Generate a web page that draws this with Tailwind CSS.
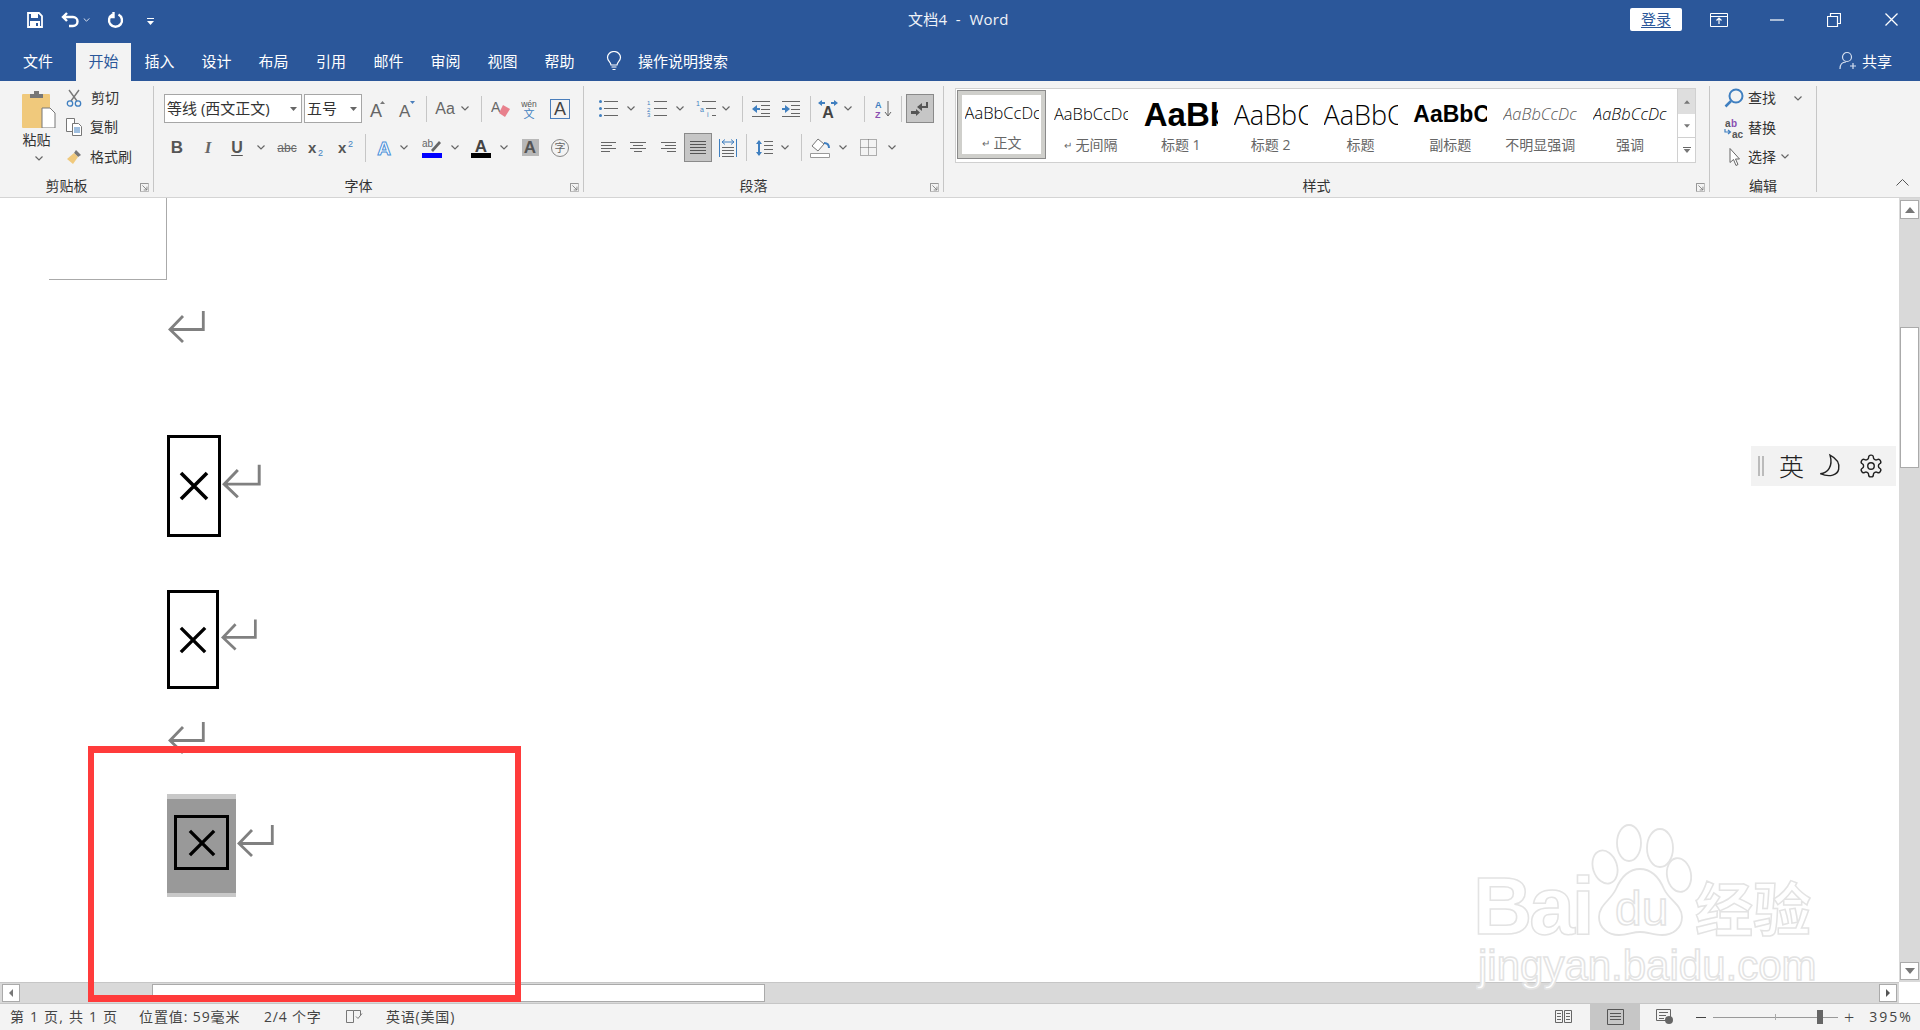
<!DOCTYPE html>
<html lang="zh-CN">
<head>
<meta charset="UTF-8">
<title>文档4 - Word</title>
<script src="https://cdn.jsdelivr.net/npm/@tailwindcss/browser@4"></script>
</head>
<body class="relative w-[1920px] h-[1030px] overflow-hidden bg-white flex flex-col text-[14px] leading-none text-[#333] [font-family:'Open_Sans','Noto_Sans_CJK_SC',sans-serif]">

<!-- shared icons -->
<svg class="hidden">
  <symbol id="chev" viewBox="0 0 8 5"><path d="M.5.5 4 4 7.500.5" fill="none" stroke="#666" stroke-width="1.200"/></symbol>
  <symbol id="launch" viewBox="0 0 11 11"><path d="M.5 10.500V.5h10M3 3l5.500 5.500M8.500 4.500v4h-4" fill="none" stroke="#777"/><path d="M.5 10.500h10v-10" fill="none" stroke="#aaa"/></symbol>
  <symbol id="ret" viewBox="0 0 38 32"><path d="M36.300 0v18.500H3M16 5 3 18.500 16 31" fill="none" stroke="#808080" stroke-width="2.800"/></symbol>
  <symbol id="cross" viewBox="0 0 30 30"><path d="M2 2l26 26M28 2 2 28" stroke="#000" stroke-width="3.600"/></symbol>
  <symbol id="tri" viewBox="0 0 10 6"><path d="M0 6 5 0l5 6z" fill="#777"/></symbol>
</svg>

<!-- title bar -->
<header class="bg-[#2b579a] text-white flex-none">
  <div class="h-[43px] pb-[4px] flex items-center">
    <div class="w-[908px] flex items-center pl-[27px]">
      <svg class="w-4 h-4" viewBox="0 0 16 16"><path d="M1 1h11l3 3v11H1z" fill="none" stroke="#fff" stroke-width="1.800"/><path d="M4 1h7v5H4zM3 9h10v6H3z" fill="#fff"/><path d="M9 11h2v3H9z" fill="#2b579a"/></svg>
      <svg class="w-[18px] h-4 ml-[18px]" viewBox="0 0 18 16"><path d="M2 5h10a4.500 4.500 0 0 1 0 9H8M6 1 2 5l4 4" fill="none" stroke="#fff" stroke-width="2.400"/></svg>
      <svg class="w-[7px] h-1 ml-[4px]" viewBox="0 0 8 5"><path d="M.5.5 4 4 7.500.5" fill="none" stroke="#dfe6f2" stroke-width="1.200"/></svg>
      <svg class="w-[17px] h-[17px] ml-[17px]" viewBox="0 0 17 17"><path d="M5.500 3.500a6.500 6.500 0 1 0 6 0M6.500 1v5h-4.500" fill="none" stroke="#fff" stroke-width="2.400"/></svg>
      <svg class="w-[7px] h-[7px] ml-[23px] mt-1" viewBox="0 0 7 7"><path d="M0 0h7v1H0zM0 3h7L3.500 7z" fill="#fff"/></svg>
    </div>
    <div class="w-[722px] text-[15px] text-[#f0f3f8] whitespace-pre tracking-[0.3px]">文档4  -  Word</div>
    <div class="w-[52px] h-[23px] bg-white text-[#2b579a] rounded-[2px] flex items-center justify-center text-[15px] underline underline-offset-2">登录</div>
    <svg class="w-[18px] h-[14px] ml-[28px]" viewBox="0 0 18 14"><path d="M.5.5h17v13H.5zM.5 3.500h17" fill="none" stroke="#fff"/><path d="M9 5v6M6.500 7.500 9 5l2.500 2.500" fill="none" stroke="#fff" stroke-width="1.200"/></svg>
    <svg class="w-[14px] h-[2px] ml-[42px]" viewBox="0 0 14 2"><path d="M0 1h14" stroke="#fff" stroke-width="1.200"/></svg>
    <svg class="w-[14px] h-[14px] ml-[43px]" viewBox="0 0 14 14"><path d="M.5 3.500h10v10H.5zM3.500 3.500v-3h10v10h-3" fill="none" stroke="#fff" stroke-width="1.200"/></svg>
    <svg class="w-[13px] h-[13px] ml-[44px]" viewBox="0 0 13 13"><path d="M.5.5l12 12M12.500.5l-12 12" stroke="#fff" stroke-width="1.300"/></svg>
  </div>
  <nav class="h-[38px] flex items-start text-[15px]">
    <div class="w-[76px] h-[38px] pb-[2px] flex items-center justify-center">文件</div>
    <div class="w-[55px] h-[38px] pb-[2px] flex items-center justify-center bg-[#f3f3f3] text-[#2b579a]">开始</div>
    <div class="w-[57px] h-[38px] pb-[2px] flex items-center justify-center">插入</div>
    <div class="w-[57px] h-[38px] pb-[2px] flex items-center justify-center">设计</div>
    <div class="w-[57px] h-[38px] pb-[2px] flex items-center justify-center">布局</div>
    <div class="w-[58px] h-[38px] pb-[2px] flex items-center justify-center">引用</div>
    <div class="w-[57px] h-[38px] pb-[2px] flex items-center justify-center">邮件</div>
    <div class="w-[57px] h-[38px] pb-[2px] flex items-center justify-center">审阅</div>
    <div class="w-[57px] h-[38px] pb-[2px] flex items-center justify-center">视图</div>
    <div class="w-[57px] h-[38px] pb-[2px] flex items-center justify-center">帮助</div>
    <div class="h-[38px] pb-[2px] flex items-center ml-[18px]">
      <svg class="w-4 h-5" viewBox="0 0 16 20"><path d="M5 14c0-3-3.500-4-3.500-7.500a6.500 6 0 0 1 13 0C14.500 10 11 11 11 14zM5.500 16h5M6.500 18.500h3" fill="none" stroke="#fff" stroke-width="1.200"/></svg>
      <span class="ml-[16px] w-[1204px]">操作说明搜索</span>
      <svg class="w-[18px] h-[20px] -ml-[3px]" viewBox="0 0 18 20"><circle cx="8" cy="6" r="4.500" fill="none" stroke="#d6e0f0" stroke-width="1.200"/><path d="M1 18c0-5 3-7 6-7M11 15h6M14 12v6" fill="none" stroke="#d6e0f0" stroke-width="1.200"/></svg>
      <span class="ml-[5px]">共享</span>
    </div>
  </nav>
</header>

<!-- ribbon -->
<section class="h-[117px] flex-none bg-[#f3f3f3] border-b border-[#d4d4d4] flex pt-[5px] text-[14px]">

  <!-- clipboard -->
  <div class="relative w-[154px] h-[106px] border-r border-[#c6c6c6] flex flex-col">
    <div class="h-[93px] flex pl-[22px] pt-[4px]">
      <div class="w-[34px] flex flex-col items-center">
        <svg class="w-[34px] h-[38px]" viewBox="0 0 34 38"><rect y="4" width="28" height="34" rx="1" fill="#f0c97c"/><path d="M8 4h4V1h5v3h4v4H8z" fill="#777"/><path d="M20 18h8l5 5v15H20z" fill="#fff" stroke="#777"/></svg>
        <span class="mt-[5px] mr-[5px]">粘贴</span>
        <svg class="w-2 h-[5px] mt-[9px]"><use href="#chev"/></svg>
      </div>
      <div class="ml-[10px] flex flex-col">
        <div class="h-[29px] flex items-center -mt-[7px]">
          <svg class="w-[16px] h-[18px]" viewBox="0 0 16 18"><path d="M3 1l8 11M13 1 5 12" stroke="#777" stroke-width="1.400"/><circle cx="4" cy="14.500" r="2.700" fill="none" stroke="#3f7fc0" stroke-width="1.300"/><circle cx="12" cy="14.500" r="2.700" fill="none" stroke="#3f7fc0" stroke-width="1.300"/></svg>
          <span class="ml-[9px]">剪切</span>
        </div>
        <div class="h-[30px] flex items-center">
          <svg class="w-[16px] h-[18px]" viewBox="0 0 16 18"><path d="M.5.5h8v13h-8z" fill="#fff" stroke="#777"/><path d="M6.500 5.500h6l3 3v9h-9z" fill="#fff" stroke="#777"/><path d="M8 10h6M8 12h6M8 14h6" stroke="#3f7fc0"/></svg>
          <span class="ml-[8px]">复制</span>
        </div>
        <div class="h-[30px] flex items-center">
          <svg class="w-[16px] h-[16px]" viewBox="0 0 16 16"><path d="M10 1l5 5-3 2-4-4z" fill="#777"/><path d="M8 4l4 4-5 7-6-5z" fill="#f0c97c"/></svg>
          <span class="ml-[8px]">格式刷</span>
        </div>
      </div>
    </div>
    <div class="h-[13px] text-center pr-[20px]">剪贴板</div>
    <svg class="absolute right-[4px] bottom-0 w-[9px] h-[9px]"><use href="#launch"/></svg>
  </div>

  <!-- font -->
  <div class="relative w-[430px] h-[106px] border-r border-[#c6c6c6] flex flex-col">
    <div class="h-[93px] pt-[8px]">
      <div class="h-[29px] flex items-center">
        <div class="ml-[10px] w-[138px] h-[29px] bg-white border border-[#a6a6a6] flex items-center pl-[2px] pr-[4px] text-[15px] justify-between"><span>等线 (西文正文)</span><svg class="w-[7px] h-[4px]" viewBox="0 0 7 4"><path d="M0 0h7L3.500 4z" fill="#666"/></svg></div>
        <div class="ml-[2px] w-[58px] h-[29px] bg-white border border-[#a6a6a6] flex items-center pl-[2px] pr-[4px] text-[15px] justify-between"><span>五号</span><svg class="w-[7px] h-[4px]" viewBox="0 0 7 4"><path d="M0 0h7L3.500 4z" fill="#666"/></svg></div>
        <div class="ml-[9px] w-4 flex justify-center"><svg class="w-5 h-5 flex-none" viewBox="0 0 20 20"><text x="1" y="18" font-size="18" fill="#666" font-family="Liberation Sans">A</text><path d="M11 5l2.500-3L16 5z" fill="#777"/></svg></div>
        <div class="ml-[13px] w-4 flex justify-center"><svg class="w-5 h-5 flex-none" viewBox="0 0 20 20"><text x="1" y="18" font-size="17" fill="#666" font-family="Liberation Sans">A</text><path d="M12 2h5l-2.500 3z" fill="#4a7ebb"/></svg></div>
        <div class="ml-[2px] w-4 flex justify-center"><div class="w-px h-[26px] bg-[#c6c6c6]"></div></div>
        <div class="ml-[3px] w-4 flex justify-center text-[16px] text-[#666] [font-family:'Liberation_Sans']">Aa</div>
        <div class="ml-[4px] w-4 flex justify-center"><svg class="w-2 h-[5px]"><use href="#chev"/></svg></div>
        <div class="w-4 flex justify-center"><div class="w-px h-[26px] bg-[#c6c6c6]"></div></div>
        <div class="ml-[4px] w-4 flex justify-center"><svg class="w-5 h-5 flex-none" viewBox="0 0 20 20"><text x="0" y="13" font-size="14" fill="#666" font-family="Liberation Sans">A</text><path d="M12 6l7 4-5 8-6-4z" fill="#e8808c"/></svg></div>
        <div class="ml-[12px] w-4 flex justify-center"><svg class="w-5 h-5 flex-none" viewBox="0 0 20 20"><text x="10" y="8" font-size="8.500" fill="#555" text-anchor="middle" font-family="Liberation Sans">wén</text><text x="10" y="19" font-size="11" fill="#3f7fc0" text-anchor="middle">文</text></svg></div>
        <div class="ml-[15px] w-4 flex justify-center"><div class="flex-none w-[20px] h-[20px] border border-[#4a7ebb] flex items-center justify-center text-[18px] text-[#444] [font-family:'Liberation_Sans']">A</div></div>
      </div>
      <div class="h-[29px] mt-[10px] flex items-center">
        <div class="ml-[15px] w-4 text-center text-[17px] font-bold text-[#555] [font-family:'Liberation_Sans']">B</div>
        <div class="ml-[15px] w-4 text-center text-[17px] italic font-bold text-[#666] [font-family:'Liberation_Serif']">I</div>
        <div class="ml-[13px] w-4 text-center text-[16px] font-bold text-[#555] underline underline-offset-2 [font-family:'Liberation_Sans']">U</div>
        <div class="ml-[8px] w-4 flex justify-center"><svg class="w-2 h-[5px]"><use href="#chev"/></svg></div>
        <div class="ml-[10px] w-4 flex justify-center text-[12px] text-[#666] line-through [font-family:'Liberation_Sans']">abc</div>
        <div class="ml-[14px] w-4 flex justify-center"><svg class="w-5 h-5 flex-none" viewBox="0 0 20 20"><text x="1" y="15" font-size="15" font-weight="bold" fill="#555" font-family="Liberation Sans">x</text><text x="11" y="18" font-size="9" fill="#3f7fc0" font-family="Liberation Sans">2</text></svg></div>
        <div class="ml-[14px] w-4 flex justify-center"><svg class="w-5 h-5 flex-none" viewBox="0 0 20 20"><text x="1" y="15" font-size="15" font-weight="bold" fill="#555" font-family="Liberation Sans">x</text><text x="11" y="9" font-size="9" fill="#3f7fc0" font-family="Liberation Sans">2</text></svg></div>
        <div class="ml-[2px] w-4 flex justify-center"><div class="w-px h-[28px] bg-[#c6c6c6]"></div></div>
        <div class="ml-[3px] w-4 flex justify-center"><svg class="w-5 h-5 flex-none" viewBox="0 0 20 20"><text x="10" y="17" font-size="19" font-weight="bold" text-anchor="middle" fill="#fff" stroke="#4a90d9" font-family="Liberation Sans">A</text></svg></div>
        <div class="ml-[4px] w-4 flex justify-center"><svg class="w-2 h-[5px]"><use href="#chev"/></svg></div>
        <div class="ml-[12px] w-4 flex justify-center"><svg class="w-5 h-5 flex-none" viewBox="0 0 20 20"><text x="0" y="9" font-size="10" fill="#666" font-family="Liberation Sans">ab</text><path d="M9 12l8-9 2 2-8 9z" fill="#666"/><path d="M0 15h20v5H0z" fill="#00f"/></svg></div>
        <div class="ml-[7px] w-4 flex justify-center"><svg class="w-2 h-[5px]"><use href="#chev"/></svg></div>
        <div class="ml-[10px] w-4 flex justify-center"><svg class="w-5 h-5 flex-none" viewBox="0 0 20 20"><text x="10" y="14" font-size="17" font-weight="bold" text-anchor="middle" fill="#444" font-family="Liberation Sans">A</text><path d="M0 15h20v5H0z" fill="#000"/></svg></div>
        <div class="ml-[7px] w-4 flex justify-center"><svg class="w-2 h-[5px]"><use href="#chev"/></svg></div>
        <div class="ml-[10px] w-4 flex justify-center"><div class="flex-none w-[17px] h-[17px] bg-[#b8b8b8] flex items-center justify-center text-[17px] font-bold text-[#555] [font-family:'Liberation_Sans']">A</div></div>
        <div class="ml-[14px] w-4 flex justify-center"><div class="flex-none w-[18px] h-[18px] rounded-full border border-[#888] flex items-center justify-center text-[11px] text-[#666]">字</div></div>
      </div>
    </div>
    <div class="h-[13px] text-center pr-[20px]">字体</div>
    <svg class="absolute right-[4px] bottom-0 w-[9px] h-[9px]"><use href="#launch"/></svg>
  </div>

  <!-- paragraph -->
  <div class="relative w-[360px] h-[106px] border-r border-[#c6c6c6] flex flex-col">
    <div class="h-[93px] pt-[8px]">
      <div class="h-[29px] flex items-center">
        <div class="ml-[16px] w-4 flex justify-center"><svg class="w-[19px] h-[17px] flex-none" viewBox="0 0 19 17"><path d="M5 1.500h14M5 8.500h14M5 15.500h14" stroke="#666"/><circle cx="1.500" cy="1.500" r="1.500" fill="#3f7fc0"/><circle cx="1.500" cy="8.500" r="1.500" fill="#3f7fc0"/><circle cx="1.500" cy="15.500" r="1.500" fill="#3f7fc0"/></svg></div>
        <div class="ml-[7px] w-4 flex justify-center"><svg class="w-2 h-[5px]"><use href="#chev"/></svg></div>
        <div class="ml-[10px] w-4 flex justify-center"><svg class="w-[20px] h-[17px] flex-none" viewBox="0 0 20 17"><path d="M7 1.500h13M7 8.500h13M7 15.500h13" stroke="#666"/><text x="0" y="5" font-size="6" fill="#3f7fc0" font-family="Liberation Sans">1</text><text x="0" y="11.500" font-size="6" fill="#3f7fc0" font-family="Liberation Sans">2</text><text x="0" y="17" font-size="6" fill="#3f7fc0" font-family="Liberation Sans">3</text></svg></div>
        <div class="ml-[7px] w-4 flex justify-center"><svg class="w-2 h-[5px]"><use href="#chev"/></svg></div>
        <div class="ml-[10px] w-4 flex justify-center"><svg class="w-[20px] h-[17px] flex-none" viewBox="0 0 20 17"><path d="M6 1.500h14M10 8.500h10M16 15.500h4" stroke="#666"/><text x="0" y="6" font-size="7" fill="#3f7fc0" font-family="Liberation Sans">1</text><text x="4" y="12" font-size="7" fill="#3f7fc0" font-family="Liberation Sans">a</text><text x="11" y="17" font-size="7" fill="#3f7fc0" font-family="Liberation Sans">i</text></svg></div>
        <div class="ml-[4px] w-4 flex justify-center"><svg class="w-2 h-[5px]"><use href="#chev"/></svg></div>
        <div class="w-4 flex justify-center"><div class="w-px h-[26px] bg-[#c6c6c6]"></div></div>
        <div class="ml-[3px] w-4 flex justify-center"><svg class="w-[18px] h-[16px] flex-none" viewBox="0 0 18 16"><path d="M0 .5h18M9 4.500h9M9 8.500h9M9 12.500h9M0 15.500h18" stroke="#666"/><path d="M0 8l5-4v3h3v2H5v3z" fill="#3f7fc0"/></svg></div>
        <div class="ml-[14px] w-4 flex justify-center"><svg class="w-[18px] h-[16px] flex-none" viewBox="0 0 18 16"><path d="M0 .5h18M9 4.500h9M9 8.500h9M9 12.500h9M0 15.500h18" stroke="#666"/><path d="M8 8 3 4v3H0v2h3v3z" fill="#3f7fc0"/></svg></div>
        <div class="ml-[3px] w-4 flex justify-center"><div class="w-px h-[26px] bg-[#c6c6c6]"></div></div>
        <div class="ml-[2px] w-4 flex justify-center"><svg class="w-[20px] h-[18px] flex-none" viewBox="0 0 20 18"><path d="M0 3l4-3v2h3v2H4v2zM20 3l-4-3v2h-3v2h3v2z" fill="#3f7fc0"/><text x="10" y="18" font-size="16" font-weight="bold" text-anchor="middle" fill="#444" font-family="Liberation Sans">A</text></svg></div>
        <div class="ml-[4px] w-4 flex justify-center"><svg class="w-2 h-[5px]"><use href="#chev"/></svg></div>
        <div class="w-4 flex justify-center"><div class="w-px h-[26px] bg-[#c6c6c6]"></div></div>
        <div class="ml-[4px] w-4 flex justify-center"><svg class="w-[18px] h-[18px] flex-none" viewBox="0 0 18 18"><text x="0" y="8" font-size="9" font-weight="bold" fill="#3f7fc0" font-family="Liberation Sans">A</text><text x="0" y="18" font-size="9" font-weight="bold" fill="#8a4fb0" font-family="Liberation Sans">Z</text><path d="M13 1v15M10 12l3 4 3-4" fill="none" stroke="#666"/></svg></div>
        <div class="ml-[1px] w-4 flex justify-center"><div class="w-px h-[26px] bg-[#c6c6c6]"></div></div>
        <div class="-ml-[3px] w-[28px] h-[29px] bg-[#c6c6c6] border border-[#8a8a8a] flex items-center justify-center"><svg class="w-[18px] h-[16px]" viewBox="0 0 18 16"><path d="M16 1v5H7" fill="none" stroke="#555" stroke-width="2"/><path d="M11 2 6 6l5 4zM0 10h5v-2l4 3.500L5 15v-2H0z" fill="#555"/></svg></div>
      </div>
      <div class="h-[29px] mt-[10px] flex items-center">
        <div class="ml-[16px] w-4 flex justify-center"><svg class="w-[15px] h-[11px] flex-none" viewBox="0 0 15 11"><path d="M0 .5h15M0 3.500h11M0 6.500h15M0 9.500h9" stroke="#666"/></svg></div>
        <div class="ml-[14px] w-4 flex justify-center"><svg class="w-[16px] h-[11px] flex-none" viewBox="0 0 16 11"><path d="M0 .5h16M3 3.500h10M0 6.500h16M4 9.500h8" stroke="#666"/></svg></div>
        <div class="ml-[14px] w-4 flex justify-center"><svg class="w-[15px] h-[11px] flex-none" viewBox="0 0 15 11"><path d="M0 .5h15M4 3.500h11M0 6.500h15M6 9.500h9" stroke="#666"/></svg></div>
        <div class="ml-[8px] w-[28px] h-[29px] bg-[#c6c6c6] border border-[#8a8a8a] flex items-center justify-center"><svg class="w-[16px] h-[13px]" viewBox="0 0 16 13"><path d="M0 .5h16M0 3.500h16M0 6.500h16M0 9.500h16M0 12.500h16" stroke="#555"/></svg></div>
        <div class="ml-[8px] w-4 flex justify-center"><svg class="w-[18px] h-[18px] flex-none" viewBox="0 0 18 18"><path d="M.5 0v18M17.500 0v18" stroke="#3f7fc0"/><path d="M3 3h12M3 3l3-2.500M3 3l3 2.500M15 3l-3-2.500M15 3l-3 2.500" fill="none" stroke="#3f7fc0"/><path d="M3 8.500h12M3 11.500h12M3 14.500h12M3 17.500h12" stroke="#666"/></svg></div>
        <div class="ml-[2px] w-4 flex justify-center"><div class="w-px h-[27px] bg-[#c6c6c6]"></div></div>
        <div class="ml-[2px] w-4 flex justify-center"><svg class="w-[17px] h-[18px] flex-none" viewBox="0 0 17 18"><path d="M3 2v14" stroke="#3f7fc0" stroke-width="2"/><path d="M0 5l3-4 3 4zM0 13l3 4 3-4z" fill="#3f7fc0"/><path d="M8 2.500h9M8 6.500h9M8 10.500h9M8 14.500h9" stroke="#666"/></svg></div>
        <div class="ml-[5px] w-4 flex justify-center"><svg class="w-2 h-[5px]"><use href="#chev"/></svg></div>
        <div class="w-4 flex justify-center"><div class="w-px h-[27px] bg-[#c6c6c6]"></div></div>
        <div class="ml-[3px] w-4 flex justify-center"><svg class="w-[20px] h-[20px] flex-none" viewBox="0 0 20 20"><path d="M8 1l6 5-6 7-6-5z" fill="#fff" stroke="#777"/><path d="M14 5c3 0 5 1 5 5" fill="none" stroke="#3f7fc0" stroke-width="2"/><path d="M.5 15.500h19v4H.5z" fill="#fff" stroke="#999"/></svg></div>
        <div class="ml-[7px] w-4 flex justify-center"><svg class="w-2 h-[5px]"><use href="#chev"/></svg></div>
        <div class="ml-[9px] w-4 flex justify-center"><svg class="w-[17px] h-[17px] flex-none" viewBox="0 0 17 17"><path d="M.5.5h16v16H.5zM8.500.5v16M.5 8.500h16" fill="none" stroke="#666" stroke-dasharray="1 1"/></svg></div>
        <div class="ml-[8px] w-4 flex justify-center"><svg class="w-2 h-[5px]"><use href="#chev"/></svg></div>
      </div>
    </div>
    <div class="h-[13px] text-center pr-[20px]">段落</div>
    <svg class="absolute right-[4px] bottom-0 w-[9px] h-[9px]"><use href="#launch"/></svg>
  </div>

  <!-- styles -->
  <div class="relative w-[766px] h-[106px] border-r border-[#c6c6c6] flex flex-col">
    <div class="h-[93px] pl-[11px] pt-[2px]">
      <div class="w-[741px] h-[75px] bg-white border border-[#d0d0d0] flex">
        <div class="w-[90px] h-[73px] flex flex-col items-center">
          <div class="ml-[1px] mt-[1px] w-[89px] h-[69px] border border-[#8a8a8a] flex">
            <div class="w-full h-full border-[4px] border-[#cfcfcb] flex flex-col items-center">
              <div class="w-[74px] h-[38px] overflow-hidden flex items-center whitespace-nowrap text-[16.500px] font-light text-black">AaBbCcDc</div>
              <div class="h-[22px] mt-[1px] flex items-center text-[14px] text-[#666]"><span class="text-[10px] mr-[4px]">↵</span>正文</div>
            </div>
          </div>
        </div>
        <div class="w-[90px] flex flex-col items-center pt-[6px]">
          <div class="w-[74px] h-[38px] overflow-hidden flex items-center whitespace-nowrap text-[16.500px] font-light text-black">AaBbCcDc</div>
          <div class="h-[22px] mt-[1px] flex items-center text-[14px] text-[#666]"><span class="text-[10px] mr-[3px]">↵</span>无间隔</div>
        </div>
        <div class="w-[90px] flex flex-col items-center pt-[6px]">
          <div class="w-[74px] h-[38px] overflow-hidden flex items-center whitespace-nowrap text-[33px] font-bold text-black [font-family:'Liberation_Sans']">AaBbC</div>
          <div class="h-[22px] mt-[1px] flex items-center text-[14px] text-[#666]">标题 1</div>
        </div>
        <div class="w-[90px] flex flex-col items-center pt-[6px]">
          <div class="w-[74px] h-[38px] overflow-hidden flex items-center whitespace-nowrap text-[27px] font-light text-black">AaBbC</div>
          <div class="h-[22px] mt-[1px] flex items-center text-[14px] text-[#666]">标题 2</div>
        </div>
        <div class="w-[90px] flex flex-col items-center pt-[6px]">
          <div class="w-[74px] h-[38px] overflow-hidden flex items-center whitespace-nowrap text-[27px] font-light text-black">AaBbC</div>
          <div class="h-[22px] mt-[1px] flex items-center text-[14px] text-[#666]">标题</div>
        </div>
        <div class="w-[90px] flex flex-col items-center pt-[6px]">
          <div class="w-[74px] h-[38px] overflow-hidden flex items-center whitespace-nowrap text-[23px] font-bold text-black [font-family:'Liberation_Sans']">AaBbC</div>
          <div class="h-[22px] mt-[1px] flex items-center text-[14px] text-[#666]">副标题</div>
        </div>
        <div class="w-[90px] flex flex-col items-center pt-[6px]">
          <div class="w-[74px] h-[38px] overflow-hidden flex items-center whitespace-nowrap text-[16.500px] font-light italic text-[#555]">AaBbCcDc</div>
          <div class="h-[22px] mt-[1px] flex items-center text-[14px] text-[#666]">不明显强调</div>
        </div>
        <div class="w-[90px] flex flex-col items-center pt-[6px]">
          <div class="w-[74px] h-[38px] overflow-hidden flex items-center whitespace-nowrap text-[16.500px] font-light italic text-black">AaBbCcDc</div>
          <div class="h-[22px] mt-[1px] flex items-center text-[14px] text-[#666]">强调</div>
        </div>
        <div class="ml-[2px] w-[18px] border-l border-[#d0d0d0] flex flex-col">
          <div class="h-[25px] bg-[#dedede] flex items-center justify-center"><svg class="w-[6px] h-[4px]"><use href="#tri"/></svg></div>
          <div class="h-[24px] flex items-center justify-center border-b border-[#d0d0d0]"><svg class="w-[6px] h-[4px] rotate-180"><use href="#tri"/></svg></div>
          <div class="flex-1 flex flex-col items-center justify-center"><div class="w-[8px] h-px bg-[#666] mb-[1px]"></div><svg class="w-[8px] h-[4px] rotate-180"><use href="#tri"/></svg></div>
        </div>
      </div>
    </div>
    <div class="h-[13px] text-center pr-[20px]">样式</div>
    <svg class="absolute right-[4px] bottom-0 w-[9px] h-[9px]"><use href="#launch"/></svg>
  </div>

  <!-- editing -->
  <div class="w-[107px] h-[106px] border-r border-[#c6c6c6] flex flex-col">
    <div class="h-[93px] pl-[14px]">
      <div class="h-[30px] mt-[-3px] flex items-center">
        <svg class="w-[20px] h-[20px]" viewBox="0 0 20 20"><circle cx="12" cy="8" r="6.500" fill="none" stroke="#3f7fc0" stroke-width="2"/><path d="M7 13l-5.500 5.500" stroke="#3f7fc0" stroke-width="2.500"/></svg>
        <span class="ml-[4px]">查找</span>
        <svg class="w-2 h-[5px] ml-[18px]"><use href="#chev"/></svg>
      </div>
      <div class="h-[29px] flex items-center">
        <svg class="w-[20px] h-[20px]" viewBox="0 0 20 20"><text x="1" y="9" font-size="10" fill="#555" font-family="Liberation Sans" font-weight="bold">a</text><text x="7" y="9" font-size="10" fill="#8a4fb0" font-family="Liberation Sans" font-weight="bold">b</text><text x="8" y="19.500" font-size="10" fill="#555" font-family="Liberation Sans" font-weight="bold">ac</text><path d="M1 11v3h5M4 12l2.500 2L4 16" fill="none" stroke="#3f7fc0" stroke-width="1.200"/></svg>
        <span class="ml-[4px]">替换</span>
      </div>
      <div class="h-[29px] flex items-center">
        <svg class="w-[20px] h-[18px]" viewBox="0 0 20 18"><path d="M6 .5v14l3.500-3 2.500 6 2-1-2.500-5.500h4z" fill="#fff" stroke="#666"/></svg>
        <span class="ml-[4px]">选择</span>
        <svg class="w-2 h-[5px] ml-[5px]"><use href="#chev"/></svg>
      </div>
    </div>
    <div class="h-[13px] text-center">编辑</div>
  </div>

  <div class="flex-1 flex items-end justify-end pr-[11px] pb-[6px] h-[106px]">
    <svg class="w-[13px] h-[7px]" viewBox="0 0 13 7"><path d="M.5 6.500l6-6 6 6" fill="none" stroke="#555"/></svg>
  </div>
</section>

<!-- document area -->
<main class="flex-none h-[805px] flex">
  <div class="w-[1899px] flex flex-col">
    <div class="h-[784px] pl-[167px] flex flex-col items-start overflow-hidden">
      <div class="-ml-[118px] w-[118px] h-[82px] flex-none border-r border-b border-[#aaa]"></div>
      <svg class="w-[38px] h-[32px] mt-[31px] flex-none"><use href="#ret"/></svg>
      <div class="mt-[92px] flex items-start flex-none">
        <div class="w-[54px] h-[102px] border-[3px] border-black flex items-center justify-center"><svg class="w-[30px] h-[30px]"><use href="#cross"/></svg></div>
        <svg class="w-[40px] h-[35px] mt-[29px]"><use href="#ret"/></svg>
      </div>
      <div class="mt-[53px] flex items-start flex-none">
        <div class="w-[52px] h-[99px] border-[3px] border-black flex items-center justify-center"><svg class="w-[28px] h-[28px]"><use href="#cross"/></svg></div>
        <svg class="w-[37px] h-[32px] mt-[29px] ml-[1px]"><use href="#ret"/></svg>
      </div>
      <svg class="w-[38px] h-[32px] mt-[33px] flex-none"><use href="#ret"/></svg>
      <div class="mt-[40px] flex items-start flex-none">
        <div class="w-[69px] h-[103px] bg-[#999] flex flex-col">
          <div class="h-[5px] bg-[#c8c8c8]"></div>
          <div class="flex-1 pt-[16px] pl-[7px]">
            <div class="w-[55px] h-[55px] border-[3px] border-black flex items-center justify-center"><svg class="w-[28px] h-[28px]"><use href="#cross"/></svg></div>
          </div>
          <div class="h-[4px] bg-[#c8c8c8]"></div>
        </div>
        <svg class="w-[38px] h-[32px] mt-[31px]"><use href="#ret"/></svg>
      </div>
    </div>
    <!-- horizontal scrollbar -->
    <div class="h-[21px] bg-[#d9d9d9] border-t border-[#c6c6c6] flex items-center pl-[2px]">
      <div class="w-[18px] h-[18px] bg-white border border-[#aaa] flex items-center justify-center"><svg class="w-[4px] h-[8px]" viewBox="0 0 4 8"><path d="M4 0v8L0 4z" fill="#777"/></svg></div>
      <div class="ml-[132px] w-[613px] h-[18px] bg-white border border-[#aaa]"></div>
      <div class="ml-[1114px] w-[18px] h-[18px] bg-white border border-[#aaa] flex items-center justify-center"><svg class="w-[4px] h-[8px]" viewBox="0 0 4 8"><path d="M0 0v8l4-4z" fill="#555"/></svg></div>
    </div>
  </div>
  <!-- vertical scrollbar -->
  <div class="w-[21px] flex flex-col">
    <div class="h-[784px] bg-[#d9d9d9] flex flex-col items-center pt-[2px]">
      <div class="w-[19px] h-[19px] flex-none bg-white border border-[#aaa] flex items-center justify-center"><svg class="w-[10px] h-[6px]"><use href="#tri"/></svg></div>
      <div class="mt-[108px] w-[19px] h-[141px] flex-none bg-white border border-[#aaa]"></div>
      <div class="mt-[494px] w-[19px] h-[18px] flex-none bg-white border border-[#aaa] flex items-center justify-center"><svg class="w-[10px] h-[6px] rotate-180"><use href="#tri"/></svg></div>
    </div>
  </div>
</main>

<!-- status bar -->
<footer class="h-[27px] flex-none bg-[#f3f3f3] border-t border-[#c6c6c6] flex items-center text-[14px] text-[#444]">
  <span class="ml-[10px] w-[129px] whitespace-pre tracking-[1.200px]">第 1 页, 共 1 页</span>
  <span class="w-[125px] tracking-[0.900px]">位置值: 59毫米</span>
  <span class="w-[82px] tracking-[0.800px]">2/4 个字</span>
  <svg class="w-[18px] h-[16px]" viewBox="0 0 18 16"><path d="M.5 1.500h7v12h-7zM7.500 1.500h7v5M10 7.500l2 2 4-5" fill="none" stroke="#777"/></svg>
  <span class="ml-[22px] w-[1169px] tracking-[0.800px]">英语(美国)</span>
  <svg class="w-[17px] h-[14px]" viewBox="0 0 17 14"><path d="M.5.5h7v12h-7zM9.500.5h7v12h-7zM2 3.500h4M2 6.500h4M2 9.500h4M11 3.500h4M11 6.500h4M11 9.500h4" fill="none" stroke="#666"/></svg>
  <div class="ml-[18px] w-[50px] h-[26px] bg-[#c6c6c6] flex items-center justify-center"><svg class="w-[17px] h-[16px]" viewBox="0 0 17 16"><path d="M.5.5h16v15H.5zM3 4.500h11M3 7.500h11M3 10.500h11" fill="none" stroke="#555"/></svg></div>
  <svg class="ml-[16px] w-[18px] h-[16px]" viewBox="0 0 18 16"><path d="M.5.5h14v11H.5zM3 3.500h9M3 6.500h7M3 9.500h5" fill="none" stroke="#666"/><circle cx="13" cy="11" r="4" fill="#666"/></svg>
  <div class="ml-[22px] w-[10px] h-px bg-[#444]"></div>
  <div class="ml-[7px] w-[125px] h-[14px] flex items-center relative">
    <div class="w-full h-px bg-[#999]"></div>
    <div class="absolute left-[62px] top-[4px] w-px h-[6px] bg-[#aaa]"></div>
    <div class="absolute left-[104px] top-0 w-[6px] h-[14px] bg-[#666]"></div>
  </div>
  <div class="ml-[6px] text-[18px] leading-none text-[#444] font-light">+</div>
  <span class="ml-[15px] tracking-[2px]">395%</span>
</footer>

<!-- red annotation -->
<div class="absolute left-[88px] top-[746px] w-[433px] h-[256px] border-x-[6px] border-y-[7px] border-[#ff3b3b]"></div>

<!-- ime toolbar -->
<div class="absolute left-[1751px] top-[446px] w-[145px] h-[40px] bg-[#f2f2f2] flex items-center text-[#222]">
  <div class="ml-[7px] w-[6px] h-[20px] border-x-2 border-[#bbb]"></div>
  <span class="ml-[15px] text-[25px] [font-weight:300]">英</span>
  <svg class="ml-[13px] w-[26px] h-[26px]" viewBox="0 0 24 24"><path d="M12 2c6 3 9 8 8 13-1 5-8 8-17 4 7 0 12-7 9-17z" fill="none" stroke="#222" stroke-width="1.300"/></svg>
  <svg class="ml-[15px] w-[26px] h-[26px]" viewBox="0 0 24 24" fill="none" stroke="#222" stroke-width="1.300"><path d="M12.220 2h-.44a2 2 0 0 0-2 2v.18a2 2 0 0 1-1 1.730l-.43.25a2 2 0 0 1-2 0l-.15-.08a2 2 0 0 0-2.730.73l-.22.38a2 2 0 0 0 .73 2.730l.15.1a2 2 0 0 1 1 1.720v.51a2 2 0 0 1-1 1.740l-.15.09a2 2 0 0 0-.73 2.730l.22.38a2 2 0 0 0 2.730.73l.15-.08a2 2 0 0 1 2 0l.43.25a2 2 0 0 1 1 1.730V20a2 2 0 0 0 2 2h.44a2 2 0 0 0 2-2v-.18a2 2 0 0 1 1-1.730l.43-.25a2 2 0 0 1 2 0l.15.08a2 2 0 0 0 2.730-.73l.22-.39a2 2 0 0 0-.73-2.730l-.15-.08a2 2 0 0 1-1-1.740v-.5a2 2 0 0 1 1-1.740l.15-.09a2 2 0 0 0 .73-2.730l-.22-.38a2 2 0 0 0-2.730-.73l-.15.08a2 2 0 0 1-2 0l-.43-.25a2 2 0 0 1-1-1.730V4a2 2 0 0 0-2-2z"/><circle cx="12" cy="12" r="3"/></svg>
</div>

<!-- watermark -->
<svg class="absolute left-[1470px] top-[820px] w-[355px] h-[175px] pointer-events-none" viewBox="0 0 355 175" fill="#fff" stroke="#e3e3e3" stroke-width="1.500">
  <text x="3" y="114" font-size="82" font-weight="bold" letter-spacing="-3" font-family="Liberation Sans">Bai</text>
  <g stroke-width="1.800">
    <ellipse cx="135" cy="47" rx="12" ry="17" transform="rotate(-18 135 47)"/>
    <ellipse cx="159" cy="23" rx="12" ry="18"/>
    <ellipse cx="190" cy="28" rx="13" ry="19"/>
    <ellipse cx="209" cy="55" rx="12" ry="17" transform="rotate(-10 209 55)"/>
    <path d="M170 49c-10 0-18 6-24 20-5 11-17 16-17 28 0 12 10 18 20 18 8 0 14-3 21-3s14 3 22 3c10 0 20-6 20-18 0-12-13-17-18-28-6-14-14-20-24-20z"/>
  </g>
  <text x="145" y="105" font-size="48" font-family="Liberation Sans">du</text>
  <text x="225" y="111" font-size="58" font-weight="bold" font-family="Noto Sans CJK SC">经验</text>
  <text x="8" y="160" font-size="42" font-family="Liberation Sans">jingyan.baidu.com</text>
</svg>

</body>
</html>
